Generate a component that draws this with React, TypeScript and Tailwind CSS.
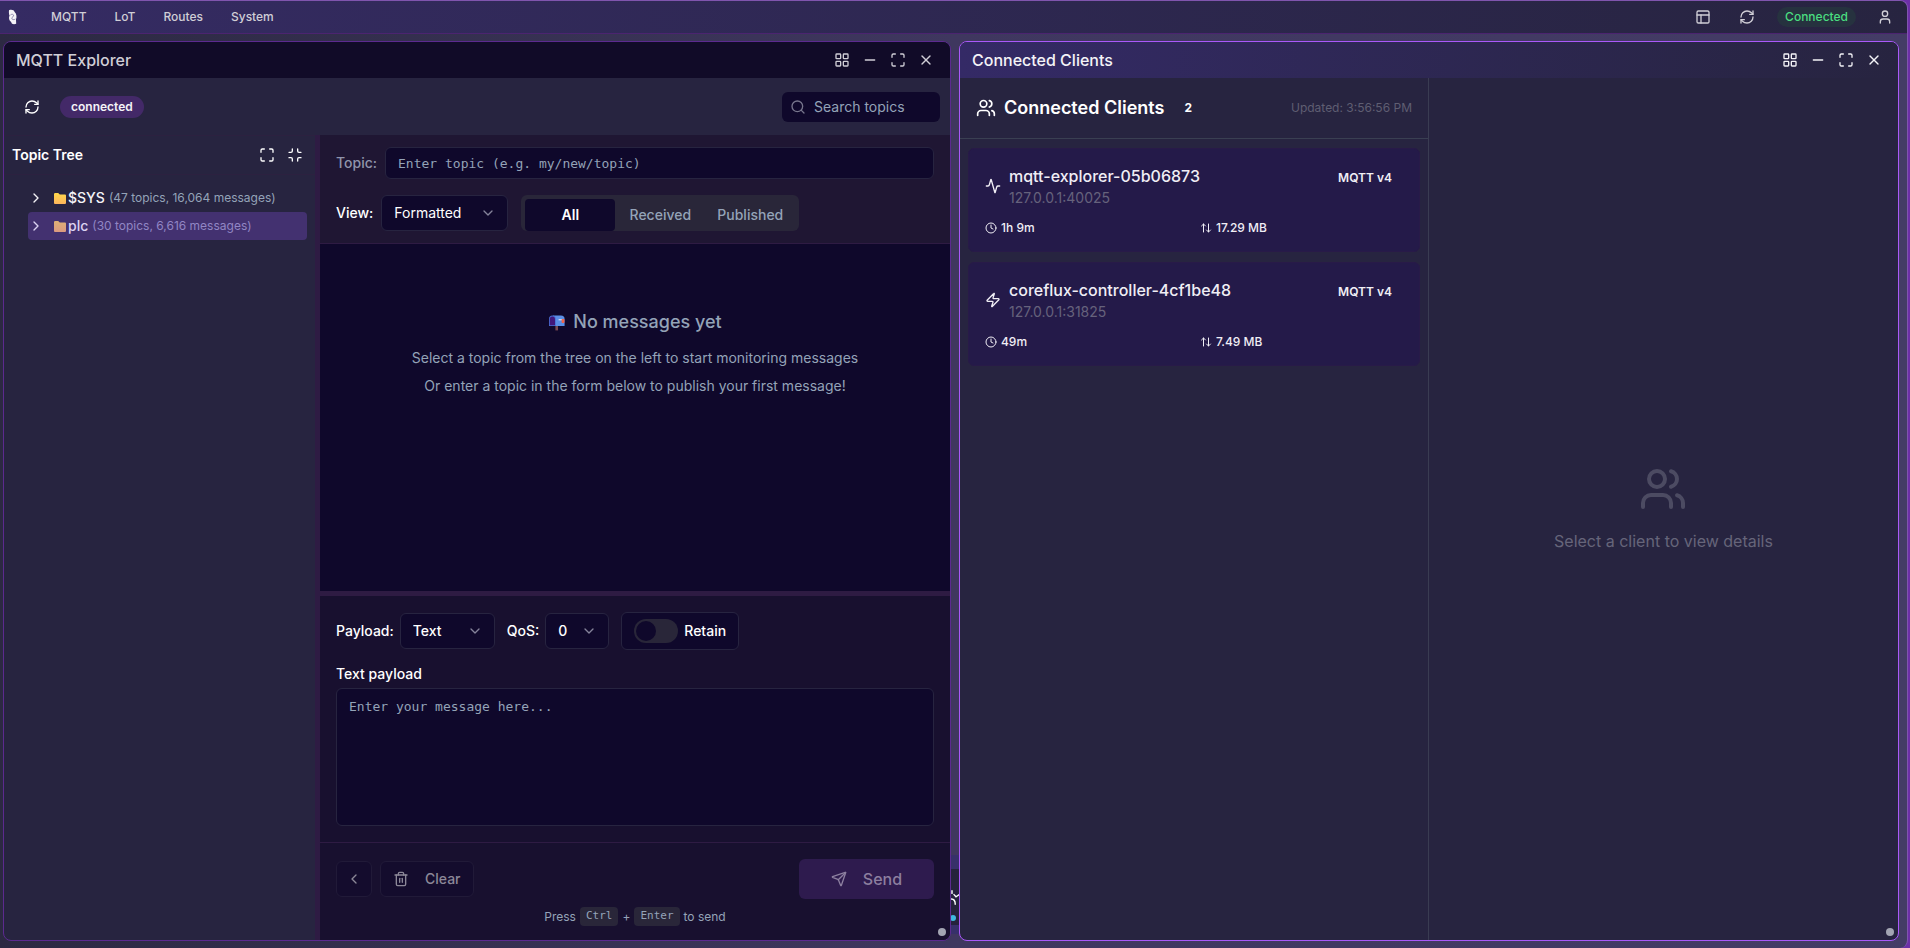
import React, { useState } from 'react';
import {
    Activity,
    ArrowUpDown,
    ChevronDown,
    ChevronLeft,
    ChevronRight,
    Clock,
    LayoutGrid,
    Maximize,
    Minimize,
    Minus,
    PanelsTopLeft,
    RefreshCw,
    Search,
    Send,
    Trash2,
    User,
    Users,
    X,
    Zap,
} from 'lucide-react';

const NAV_ITEMS = ['MQTT', 'LoT', 'Routes', 'System'];

const TOPICS = [
    { name: '$SYS', info: '(47 topics, 16,064 messages)' },
    { name: 'plc', info: '(30 topics, 6,616 messages)' },
];

const CLIENTS = [
    { id: 'mqtt-explorer-05b06873', address: '127.0.0.1:40025', uptime: '1h 9m', traffic: '17.29 MB', icon: Activity },
    { id: 'coreflux-controller-4cf1be48', address: '127.0.0.1:31825', uptime: '49m', traffic: '7.49 MB', icon: Zap },
];

const Logo: React.FC = () => (
    <svg className="w-[9px] h-4" viewBox="0 0 9 16" fill="none">
        <path d="M1 1.2C3.4 0.4 6 0.8 6.6 3C8.6 4.8 9 8 8 10.4L8.2 14.8C5.8 15.8 3.4 15.2 3.2 13C1 11.6 0.4 9 1.6 6.6C0.8 5 0.8 3 1 1.2Z" fill="#f4f3f7" />
        <path d="M2.4 6C4 4.6 5.8 5.4 5.6 6.8C5.4 8 3.6 8 3.8 9.4C4 10.8 6 11 7.4 10" stroke="#6a6390" strokeWidth="0.7" />
    </svg>
);

const FolderIcon: React.FC<{ dimmed: boolean }> = ({ dimmed }) => (
    <svg className="w-3.5 h-3.5" viewBox="0 0 14 14">
        <defs>
            <linearGradient id={dimmed ? 'folder-dim' : 'folder'} x1="0" y1="0" x2="0" y2="1">
                <stop offset="0" stopColor={dimmed ? '#deb075' : '#ffd84a'} />
                <stop offset="1" stopColor={dimmed ? '#dc9a80' : '#fdb55c'} />
            </linearGradient>
        </defs>
        <path d="M1 3.2Q1 2 2.2 2H5.2L6.8 3.4H12Q13 3.4 13 4.4V12Q13 13 12 13H2Q1 13 1 12Z" fill={dimmed ? 'url(#folder-dim)' : 'url(#folder)'} />
    </svg>
);

const MailboxIcon: React.FC = () => (
    <svg className="w-[18px] h-[18px]" viewBox="0 0 18 18">
        <rect x="7.4" y="12" width="2.6" height="5.4" fill="#7a4a52" />
        <path d="M5 2.4H13Q16.6 2.6 16.6 6V13H5Z" fill="#5b8fe6" />
        <path d="M1 6Q1 2.4 4.4 2.4Q7.8 2.4 7.8 6V13H1Z" fill="#4a6fd4" />
        <path d="M1.8 6.2Q1.8 3.4 4.4 3.4Q7 3.4 7 6.2V12.2H1.8Z" fill="#42177a" />
        <path d="M10.6 6H15.6V7.4H10.6Z" fill="#c8d8f4" />
        <rect x="13.6" y="6" width="2.8" height="4" rx="0.8" fill="#f0644a" />
    </svg>
);

interface WindowProps {
    title: string;
    active?: boolean;
    className: string;
    children: React.ReactNode;
}

const WindowFrame: React.FC<WindowProps> = ({ title, active, className, children }) => (
    <section
        className={`relative z-10 flex flex-col min-w-0 rounded-lg border overflow-hidden bg-[#272440] ${active ? 'border-[#aa59fa]' : 'border-[#5c2a90]'} ${className}`}
    >
        <div
            className={`flex items-center justify-between h-9 shrink-0 px-3 ${active ? 'bg-linear-to-r from-[#342a66] to-[#272440] text-[#f4f3f7]' : 'bg-[#110b28] text-[#d0ced6]'}`}
        >
            <h2 className="text-base font-medium">{title}</h2>
            <div className="flex items-center gap-1">
                <button aria-label="Tile" className="w-6 h-6 flex items-center justify-center"><LayoutGrid size={16} /></button>
                <button aria-label="Minimize" className="w-6 h-6 flex items-center justify-center"><Minus size={16} /></button>
                <button aria-label="Maximize" className="w-6 h-6 flex items-center justify-center"><Maximize size={16} /></button>
                <button aria-label="Close" className="w-6 h-6 flex items-center justify-center"><X size={16} /></button>
            </div>
        </div>
        {children}
        <span className="absolute right-1 bottom-1 w-2 h-2 rounded-full bg-[#a3a5b3]" />
    </section>
);

interface SelectProps {
    id: string;
    options: string[];
    className: string;
}

const Select: React.FC<SelectProps> = ({ id, options, className }) => (
    <div className={`relative h-9 ${className}`}>
        <select id={id} className="w-full h-full px-3 appearance-none rounded-md border border-[#272440] bg-[#0f082b] text-sm text-white">
            {options.map((o) => <option key={o}>{o}</option>)}
        </select>
        <ChevronDown size={16} className="absolute right-3 top-2.5 text-[#85839a] pointer-events-none" />
    </div>
);

const MqttExplorer: React.FC = () => {
    const [filter, setFilter] = useState('All');
    const [selected, setSelected] = useState('plc');

    return (
        <WindowFrame title="MQTT Explorer" className="flex-[948]">
            <div className="flex items-center justify-between h-[57px] shrink-0 pl-5 pr-2.5">
                <div className="flex items-center gap-5">
                    <button aria-label="Refresh" className="text-white"><RefreshCw size={16} /></button>
                    <span className="rounded-full bg-[#432968] px-[11px] py-[3px] text-xs font-semibold text-[#f4f3f7]">connected</span>
                </div>
                <div className="relative">
                    <Search size={16} className="absolute left-2 top-[7px] text-[#77758c]" />
                    <input
                        aria-label="Search topics"
                        placeholder="Search topics"
                        className="w-[158px] h-[30px] pl-8 pr-2 rounded-md bg-[#0f082b] text-sm text-white placeholder:text-[#94a3b8]"
                    />
                </div>
            </div>
            <div className="flex flex-1 min-h-0">
                <aside className="w-[311px] shrink-0">
                    <div className="flex items-center justify-between h-10 pl-2 pr-3 border-y border-[#2c2140]">
                        <h3 className="text-sm font-semibold text-white">Topic Tree</h3>
                        <div className="flex gap-3 text-white">
                            <button aria-label="Expand all"><Maximize size={16} /></button>
                            <button aria-label="Collapse all"><Minimize size={16} /></button>
                        </div>
                    </div>
                    <ul className="pt-[9px] pl-6 pr-2">
                        {TOPICS.map((t) => (
                            <li key={t.name}>
                                <button
                                    onClick={() => setSelected(t.name)}
                                    className={`flex items-center w-full h-7 rounded text-left ${selected === t.name ? 'bg-[#433170] text-[#dcd2f2]' : 'text-[#f4f3f7]'}`}
                                >
                                    <ChevronRight size={16} className="mr-[9px]" />
                                    <FolderIcon dimmed={selected === t.name} />
                                    <span className="ml-px text-sm font-medium">{t.name}</span>
                                    <span className={`ml-1 text-xs ${selected === t.name ? 'text-[#9186c4]' : 'text-[#94a3b8]'}`}>{t.info}</span>
                                </button>
                            </li>
                        ))}
                    </ul>
                </aside>
                <div className="w-[5px] shrink-0 bg-[#2e1b43]" />
                <div className="flex flex-col flex-1 min-w-0">
                    <div className="px-4 py-3 space-y-4 bg-[#1f1633] border-b border-[#2e1b43]">
                        <div className="flex items-center gap-2">
                            <label htmlFor="topic" className="text-sm font-medium text-[#8f94ab]">Topic:</label>
                            <input
                                id="topic"
                                placeholder="Enter topic (e.g. my/new/topic)"
                                className="flex-1 h-8 px-3 rounded-md border border-[#272440] bg-[#0f082b] font-['DejaVu_Sans_Mono',monospace] text-[13px] text-white placeholder:text-[#94a3b8]"
                            />
                        </div>
                        <div className="flex items-center">
                            <label htmlFor="view" className="mr-2 text-sm font-medium text-white">View:</label>
                            <Select id="view" options={['Formatted', 'Raw']} className="w-[127px] mr-[13px]" />
                            <div className="grid grid-cols-3 h-9 w-[278px] pt-1 px-1 rounded-md bg-[#292639]">
                                {['All', 'Received', 'Published'].map((f) => (
                                    <button
                                        key={f}
                                        onClick={() => setFilter(f)}
                                        className={`rounded text-sm ${filter === f ? 'bg-[#0f082b] text-white font-semibold' : 'text-[#94a3b8] font-medium'}`}
                                    >
                                        {f}
                                    </button>
                                ))}
                            </div>
                        </div>
                    </div>
                    <div className="flex-1 min-h-0 pt-16 text-center text-[#94a3b8] bg-[#0f082b]">
                        <div className="flex items-center justify-center gap-[7px] text-lg leading-7 font-medium">
                            <MailboxIcon />
                            <p>No messages yet</p>
                        </div>
                        <p className="mt-3 text-sm">Select a topic from the tree on the left to start monitoring messages</p>
                        <p className="mt-2 text-sm">Or enter a topic in the form below to publish your first message!</p>
                    </div>
                    <div className="h-[5px] shrink-0 bg-[#2e1b43]" />
                    <div className="shrink-0 bg-[#18102f]">
                        <div className="p-4">
                            <div className="flex items-center text-sm font-medium text-white">
                                <label htmlFor="payload" className="mr-1.5">Payload:</label>
                                <Select id="payload" options={['Text', 'JSON']} className="w-[95px] mr-3" />
                                <label htmlFor="qos" className="mr-1.5">QoS:</label>
                                <Select id="qos" options={['0', '1', '2']} className="w-16 mr-3" />
                                <label className="flex items-center gap-1.5 h-[38px] px-3 rounded-md border border-[#272440] bg-[#0f082b]">
                                    <input type="checkbox" className="peer sr-only" />
                                    <span className="w-11 h-6 p-0.5 rounded-full bg-[#292639] peer-checked:pl-[22px]">
                                        <span className="block w-5 h-5 rounded-full bg-[#0f082b]" />
                                    </span>
                                    Retain
                                </label>
                            </div>
                            <label htmlFor="message" className="block mt-3.5 mb-1 text-sm font-medium text-white">Text payload</label>
                            <textarea
                                id="message"
                                placeholder="Enter your message here..."
                                className="block w-full h-[138px] px-3 py-2 resize-none rounded-md border border-[#272440] bg-[#0f082b] font-['DejaVu_Sans_Mono',monospace] text-[13px] text-white placeholder:text-[#94a3b8]"
                            />
                        </div>
                        <div className="px-4 pt-4 pb-3.5 border-t border-[#2e1b43]">
                            <div className="flex items-center gap-2">
                                <button aria-label="Back" className="w-9 h-9 flex items-center justify-center rounded-md border border-[#211a38] bg-[#140c2d] text-[#8c8898]">
                                    <ChevronLeft size={16} />
                                </button>
                                <button className="h-9 px-3 flex items-center gap-4 rounded-md border border-[#211a38] bg-[#140c2d] text-sm font-medium text-[#8c8898]">
                                    <Trash2 size={16} />
                                    Clear
                                </button>
                                <button className="ml-auto w-[135px] h-10 flex items-center justify-center gap-4 rounded-md bg-[#2e1b4e] text-base font-medium text-[#8c7f9f]">
                                    <Send size={16} />
                                    Send
                                </button>
                            </div>
                            <p className="flex items-center justify-center gap-1 mt-2 text-xs text-[#94a3b8]">
                                Press
                                <kbd className="px-1.5 py-0.5 rounded bg-[#292639] font-['DejaVu_Sans_Mono',monospace] text-[11px]">Ctrl</kbd>
                                +
                                <kbd className="px-1.5 py-0.5 rounded bg-[#292639] font-['DejaVu_Sans_Mono',monospace] text-[11px]">Enter</kbd>
                                to send
                            </p>
                        </div>
                    </div>
                </div>
            </div>
        </WindowFrame>
    );
};

const ConnectedClients: React.FC = () => (
    <WindowFrame title="Connected Clients" active className="flex-[940]">
        <div className="flex flex-1 min-h-0">
            <div className="w-1/2 border-r border-[#3a3c52]">
                <div className="flex items-center h-[61px] px-4 border-b border-[#3a3f52]">
                    <Users size={20} className="text-white" />
                    <h3 className="ml-2 text-lg font-semibold text-white">Connected Clients</h3>
                    <span className="ml-2.5 px-2.5 text-xs font-bold text-white">2</span>
                    <span className="ml-auto text-xs text-[#5f5e72]">Updated: 3:56:56 PM</span>
                </div>
                <div className="px-2 pt-[9px] space-y-2.5">
                    {CLIENTS.map((c) => (
                        <button key={c.id} className="block w-full h-[104px] px-4 rounded-md bg-[#241a49] border border-[#281a48] text-left text-[#f0eef5]">
                            <div className="flex items-center">
                                <c.icon size={16} />
                                <div className="ml-2">
                                    <p className="text-base leading-6 font-medium">{c.id}</p>
                                    <p className="text-sm leading-5 text-[#66627c]">{c.address}</p>
                                </div>
                                <span className="ml-auto self-start mt-1.5 mr-[11px] text-xs font-semibold">MQTT v4</span>
                            </div>
                            <div className="grid grid-cols-2 gap-3 mt-3 text-xs font-medium">
                                <span className="flex items-center gap-1"><Clock size={12} />{c.uptime}</span>
                                <span className="flex items-center gap-1"><ArrowUpDown size={12} />{c.traffic}</span>
                            </div>
                        </button>
                    ))}
                </div>
            </div>
            <div className="flex flex-col items-center justify-center flex-1 text-[#66657a]">
                <Users size={48} className="mb-4 opacity-60" />
                <p className="text-base">Select a client to view details</p>
            </div>
        </div>
    </WindowFrame>
);

export default function App() {
    return (
        <div className="h-screen pr-0.5 bg-[#6d2fa8] font-[Inter,sans-serif]">
            <div className="flex flex-col h-full rounded-r-lg border-t border-r border-[#8055ae] bg-linear-to-r from-[#2c2942] via-[#3f375f] to-[#443c66] overflow-hidden">
                <header className="flex items-center justify-between h-[33px] shrink-0 px-2 border-b border-[#4b2470] bg-linear-to-r from-[#352b63] to-[#272440]">
                    <div className="flex items-center">
                        <Logo />
                        <nav className="flex gap-7 ml-[34px]">
                            {NAV_ITEMS.map((item) => (
                                <a key={item} href="#" className="text-xs font-medium text-[#d0ced6]">{item}</a>
                            ))}
                        </nav>
                    </div>
                    <div className="flex items-center pr-1.5 text-[#d0ced6]">
                        <button aria-label="Layout" className="mr-7"><PanelsTopLeft size={16} /></button>
                        <button aria-label="Reload" className="mr-[22px]"><RefreshCw size={16} /></button>
                        <span className="mr-[21px] px-2 py-0.5 rounded-full bg-[#26323f] text-xs font-medium text-[#4ade80]">Connected</span>
                        <button aria-label="Account"><User size={16} /></button>
                    </div>
                </header>
                <main className="relative flex flex-1 min-h-0 gap-2 pt-[7px] pr-2 pb-[7px] pl-[3px]">
                    <MqttExplorer />
                    <ConnectedClients />
                    {/* window stacked behind the other two */}
                    <div className="absolute left-1/2 bottom-3.5 w-5 h-[79px] -ml-3 pt-3.5 bg-[#37306a]">
                        <div className="h-14 bg-[#25223c]" />
                        <svg className="absolute left-[9px] top-[35px] w-2.5 h-4" viewBox="0 0 10 16" fill="none" stroke="#fff" strokeWidth="1.4" strokeLinecap="round">
                            <path d="M1 0.8V3.4M3 4.6L5 6.8L9 4M0.5 9Q4.4 9.4 4.2 14.2" />
                        </svg>
                        <span className="absolute left-2 top-[60px] w-1.5 h-1.5 rounded-full bg-[#3fb8e0]" />
                    </div>
                </main>
            </div>
        </div>
    );
}
